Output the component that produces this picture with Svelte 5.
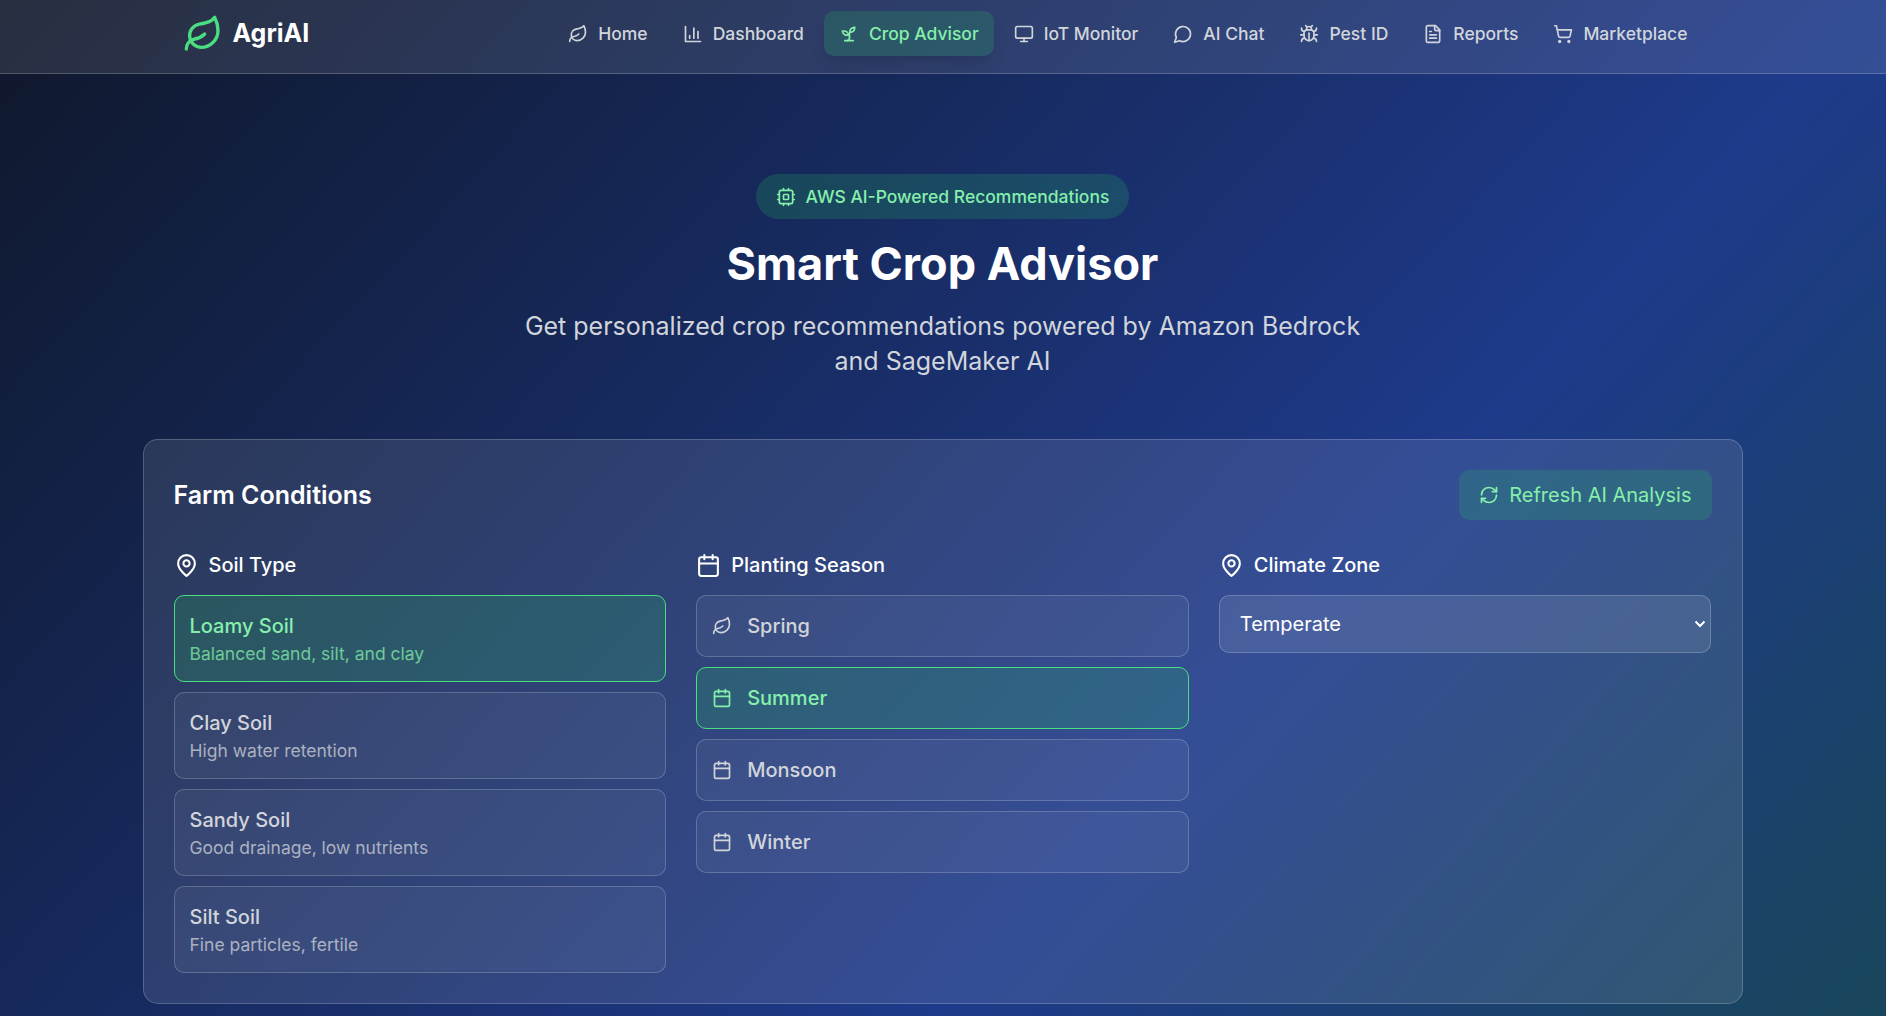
<script lang="ts">
	type IconName = keyof typeof icons;

	const icons = {
		leaf: [
			'M11 20A7 7 0 0 1 9.8 6.1C15.5 5 17 4.48 19 2c1 2 2 4.18 2 8 0 5.5-4.78 10-10 10Z',
			'M2 21c0-3 1.85-5.36 5.08-6C9.5 14.52 12 13 13 12'
		],
		chart: ['M3 3v18h18', 'M18 17V9', 'M13 17V5', 'M8 17v-3'],
		sprout: [
			'M7 20h10',
			'M10 20c5.5-2.5.8-6.4 3-10',
			'M9.5 9.4c1.1.8 1.8 2.2 2.3 3.7-2 .4-3.5.4-4.8-.3-1.2-.6-2.3-1.9-3-4.2 2.8-.5 4.4 0 5.5.8z',
			'M14.1 6a7 7 0 0 0-1.1 4c1.9-.1 3.3-.6 4.3-1.4 1-1 1.6-2.3 1.7-4.6-2.7.1-4 1-4.9 2z'
		],
		monitor: [
			'M4 3h16a2 2 0 0 1 2 2v10a2 2 0 0 1-2 2H4a2 2 0 0 1-2-2V5a2 2 0 0 1 2-2z',
			'M8 21h8',
			'M12 17v4'
		],
		chat: ['M7.9 20A9 9 0 1 0 4 16.1L2 22Z'],
		bug: [
			'm8 2 1.88 1.88',
			'M14.12 3.88 16 2',
			'M9 7.13v-1a3.003 3.003 0 1 1 6 0v1',
			'M12 20c-3.3 0-6-2.7-6-6v-3a4 4 0 0 1 4-4h4a4 4 0 0 1 4 4v3c0 3.3-2.7 6-6 6',
			'M12 20v-9',
			'M6.53 9C4.6 8.8 3 7.1 3 5',
			'M6 13H2',
			'M3 21c0-2.1 1.7-3.9 3.8-4',
			'M20.97 5c0 2.1-1.6 3.8-3.5 4',
			'M22 13h-4',
			'M17.2 17c2.1.1 3.8 1.9 3.8 4'
		],
		file: [
			'M15 2H6a2 2 0 0 0-2 2v16a2 2 0 0 0 2 2h12a2 2 0 0 0 2-2V7Z',
			'M14 2v4a2 2 0 0 0 2 2h4',
			'M10 9H8',
			'M16 13H8',
			'M16 17H8'
		],
		cart: [
			'M7 21a1 1 0 1 0 2 0a1 1 0 1 0-2 0',
			'M18 21a1 1 0 1 0 2 0a1 1 0 1 0-2 0',
			'M2.05 2.05h2l2.66 12.42a2 2 0 0 0 2 1.58h9.78a2 2 0 0 0 1.95-1.57l1.65-7.43H5.12'
		],
		cpu: [
			'M6 4h12a2 2 0 0 1 2 2v12a2 2 0 0 1-2 2H6a2 2 0 0 1-2-2V6a2 2 0 0 1 2-2z',
			'M10 9h4a1 1 0 0 1 1 1v4a1 1 0 0 1-1 1h-4a1 1 0 0 1-1-1v-4a1 1 0 0 1 1-1z',
			'M15 2v2M15 20v2M2 15h2M2 9h2M20 15h2M20 9h2M9 2v2M9 20v2'
		],
		refresh: [
			'M3 12a9 9 0 0 1 9-9 9.75 9.75 0 0 1 6.74 2.74L21 8',
			'M21 3v5h-5',
			'M21 12a9 9 0 0 1-9 9 9.75 9.75 0 0 1-6.74-2.74L3 16',
			'M8 16H3v5'
		],
		pin: [
			'M20 10c0 6-8 12-8 12s-8-6-8-12a8 8 0 0 1 16 0Z',
			'M9 10a3 3 0 1 0 6 0a3 3 0 1 0-6 0'
		],
		calendar: [
			'M8 2v4',
			'M16 2v4',
			'M5 4h14a2 2 0 0 1 2 2v14a2 2 0 0 1-2 2H5a2 2 0 0 1-2-2V6a2 2 0 0 1 2-2z',
			'M3 10h18'
		]
	};

	const navItems: { label: string; icon: IconName }[] = [
		{ label: 'Home', icon: 'leaf' },
		{ label: 'Dashboard', icon: 'chart' },
		{ label: 'Crop Advisor', icon: 'sprout' },
		{ label: 'IoT Monitor', icon: 'monitor' },
		{ label: 'AI Chat', icon: 'chat' },
		{ label: 'Pest ID', icon: 'bug' },
		{ label: 'Reports', icon: 'file' },
		{ label: 'Marketplace', icon: 'cart' }
	];

	const soilTypes = [
		{ id: 'loamy', name: 'Loamy Soil', description: 'Balanced sand, silt, and clay' },
		{ id: 'clay', name: 'Clay Soil', description: 'High water retention' },
		{ id: 'sandy', name: 'Sandy Soil', description: 'Good drainage, low nutrients' },
		{ id: 'silt', name: 'Silt Soil', description: 'Fine particles, fertile' }
	];

	const seasons: { id: string; name: string; icon: IconName }[] = [
		{ id: 'spring', name: 'Spring', icon: 'leaf' },
		{ id: 'summer', name: 'Summer', icon: 'calendar' },
		{ id: 'monsoon', name: 'Monsoon', icon: 'calendar' },
		{ id: 'winter', name: 'Winter', icon: 'calendar' }
	];

	let activePage = $state('Crop Advisor');
	let selectedSoil = $state('loamy');
	let selectedSeason = $state('summer');
</script>

{#snippet icon(name: IconName, size: number)}
	<svg class="icon" width={size} height={size} viewBox="0 0 24 24" aria-hidden="true">
		{#each icons[name] as d}
			<path {d} />
		{/each}
	</svg>
{/snippet}

<div class="page">
	<nav class="navbar">
		<div class="navbar-inner">
			<div class="brand">
				<span class="brand-icon">{@render icon('leaf', 40)}</span>
				<span class="brand-name">AgriAI</span>
			</div>
			<div class="nav-links">
				{#each navItems as item}
					<button
						class="nav-link"
						class:active={activePage === item.label}
						onclick={() => (activePage = item.label)}
					>
						{@render icon(item.icon, 20)}
						<span>{item.label}</span>
					</button>
				{/each}
			</div>
		</div>
	</nav>

	<main class="content">
		<header class="hero">
			<div class="badge">
				{@render icon('cpu', 20)}
				<span>AWS AI-Powered Recommendations</span>
			</div>
			<h1>Smart Crop Advisor</h1>
			<p>Get personalized crop recommendations powered by Amazon Bedrock and SageMaker AI</p>
		</header>

		<section class="card">
			<div class="card-header">
				<h2>Farm Conditions</h2>
				<button class="refresh">
					{@render icon('refresh', 20)}
					<span>Refresh AI Analysis</span>
				</button>
			</div>

			<div class="columns">
				<div>
					<div class="field-label">
						{@render icon('pin', 25)}
						<span>Soil Type</span>
					</div>
					<div class="options">
						{#each soilTypes as soil}
							<button
								class="option"
								class:selected={selectedSoil === soil.id}
								onclick={() => (selectedSoil = soil.id)}
							>
								<div class="option-name">{soil.name}</div>
								<div class="option-description">{soil.description}</div>
							</button>
						{/each}
					</div>
				</div>

				<div>
					<div class="field-label">
						{@render icon('calendar', 25)}
						<span>Planting Season</span>
					</div>
					<div class="options">
						{#each seasons as season}
							<button
								class="option season"
								class:selected={selectedSeason === season.id}
								onclick={() => (selectedSeason = season.id)}
							>
								{@render icon(season.icon, 20)}
								<span class="option-name">{season.name}</span>
							</button>
						{/each}
					</div>
				</div>

				<div>
					<div class="field-label">
						{@render icon('pin', 25)}
						<span>Climate Zone</span>
					</div>
					<button class="select">
						<span>Temperate</span>
						<svg class="chevron" width="12" height="8" viewBox="0 0 12 8" aria-hidden="true">
							<path d="M1.5 1.5 6 6l4.5-4.5" />
						</svg>
					</button>
				</div>
			</div>
		</section>
	</main>
</div>

<style>
	:global(body) {
		margin: 0;
		overflow: hidden;
	}

	.page {
		height: 1016px;
		overflow: hidden;
		box-sizing: border-box;
		padding-right: 1px;
		font-family: Inter, 'Liberation Sans', sans-serif;
		font-size: 20px;
		line-height: 30px;
		color: #fff;
		background: linear-gradient(to bottom right, #0f172a, #1e3a8a, #14532d) 0 -7px / 100% 2040px no-repeat;
	}

	button {
		font: inherit;
		color: inherit;
		margin: 0;
		padding: 0;
		border: none;
		background: none;
		text-align: left;
		cursor: pointer;
	}

	.icon {
		display: block;
		flex-shrink: 0;
		fill: none;
		stroke: currentColor;
		stroke-width: 2;
		stroke-linecap: round;
		stroke-linejoin: round;
	}

	/* Navbar */
	.navbar {
		height: 73px;
		margin-right: -1px;
		padding-right: 1px;
		background: rgba(255, 255, 255, 0.1);
		border-bottom: 1px solid rgba(255, 255, 255, 0.2);
	}

	.navbar-inner {
		display: flex;
		align-items: center;
		justify-content: space-between;
		width: 1520px;
		height: 67px;
		margin: 0 auto;
	}

	.brand {
		display: flex;
		align-items: center;
		gap: 10px;
	}

	.brand-icon {
		color: #4ade80;
	}

	.brand-name {
		font-size: 25px;
		font-weight: 700;
		line-height: 35px;
	}

	.nav-links {
		display: flex;
		gap: 5px;
	}

	.nav-link {
		display: flex;
		align-items: center;
		gap: 10px;
		padding: 10px 15px;
		border-radius: 10px;
		font-size: 17.5px;
		font-weight: 500;
		line-height: 25px;
		color: #d1d5db;
	}

	.nav-link.active {
		color: #86efac;
		background: rgba(34, 197, 94, 0.2);
		box-shadow: 0 12px 19px -4px rgba(0, 0, 0, 0.1), 0 5px 7px -5px rgba(0, 0, 0, 0.1);
	}

	/* Hero */
	.content {
		width: 1600px;
		margin: 0 auto;
		padding-top: 100px;
	}

	.hero {
		display: flex;
		flex-direction: column;
		align-items: center;
		gap: 20px;
		margin-bottom: 60px;
		text-align: center;
	}

	.badge {
		display: flex;
		align-items: center;
		gap: 10px;
		padding: 10px 20px;
		border-radius: 999px;
		font-size: 17.5px;
		font-weight: 500;
		line-height: 25px;
		color: #86efac;
		background: rgba(34, 197, 94, 0.2);
	}

	h1 {
		margin: 0;
		font-size: 45px;
		font-weight: 700;
		line-height: 50px;
	}

	.hero p {
		width: 840px;
		margin: 0;
		font-size: 25px;
		line-height: 35px;
		color: #d1d5db;
	}

	/* Farm conditions */
	.card {
		padding: 30px;
		border: 1px solid rgba(255, 255, 255, 0.2);
		border-radius: 15px;
		background: rgba(255, 255, 255, 0.1);
	}

	.card-header {
		display: flex;
		align-items: center;
		justify-content: space-between;
		margin-bottom: 30px;
	}

	h2 {
		margin: 0;
		font-size: 25px;
		font-weight: 600;
		line-height: 35px;
	}

	.refresh {
		display: flex;
		align-items: center;
		gap: 10px;
		padding: 10px 20px;
		border-radius: 10px;
		color: #86efac;
		background: rgba(34, 197, 94, 0.2);
	}

	.columns {
		display: grid;
		grid-template-columns: repeat(3, 1fr);
		gap: 30px;
	}

	.field-label {
		display: flex;
		align-items: center;
		gap: 10px;
		margin-bottom: 15px;
		font-weight: 500;
	}

	.options {
		display: flex;
		flex-direction: column;
		gap: 10px;
	}

	.option {
		padding: 15px;
		border: 1px solid rgba(255, 255, 255, 0.2);
		border-radius: 10px;
		color: #d1d5db;
		background: rgba(255, 255, 255, 0.05);
	}

	.option.selected {
		color: #86efac;
		border-color: #4ade80;
		background: rgba(34, 197, 94, 0.2);
	}

	.option-name {
		font-weight: 500;
	}

	.option-description {
		font-size: 17.5px;
		line-height: 25px;
		opacity: 0.75;
	}

	.season {
		display: flex;
		align-items: center;
		gap: 15px;
	}

	.select {
		display: flex;
		align-items: center;
		justify-content: space-between;
		box-sizing: border-box;
		width: 100%;
		height: 58px;
		padding: 0 4px 0 20px;
		border: 1px solid rgba(255, 255, 255, 0.2);
		border-radius: 10px;
		background: rgba(255, 255, 255, 0.1);
	}

	.chevron {
		fill: none;
		stroke: #fff;
		stroke-width: 2;
	}
</style>
